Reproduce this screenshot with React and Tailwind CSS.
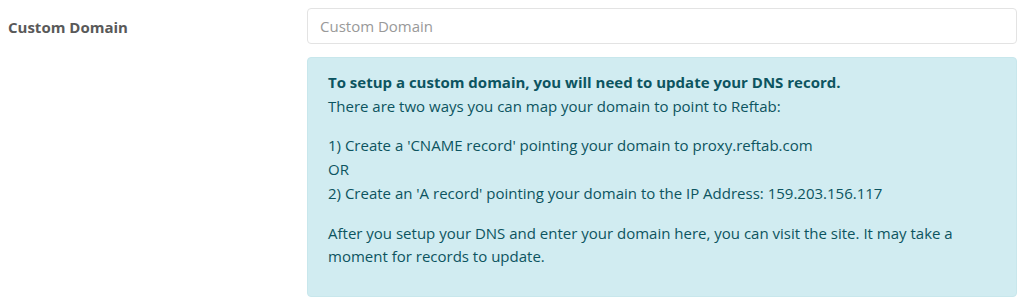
export default function App() {
  return (
    <div className="w-[1024px] h-[302px] bg-white flex" style={{ fontFamily: '"Open Sans", "Noto Sans", sans-serif' }}>
      <div className="w-[307px] shrink-0 pl-2 pt-[15px]">
        <div className="text-[15px] leading-6 font-bold text-[#595959]">Custom Domain</div>
      </div>
      <div className="w-[710px] shrink-0 pt-2 flex flex-col">
        <input
          type="text"
          placeholder="Custom Domain"
          className="h-[36px] w-full rounded border border-[#e3e3e3] px-3 text-[15px] text-[#555] placeholder:text-[#999999] outline-none"
          style={{ fontFamily: '"Open Sans", sans-serif' }}
        />
        <div className="mt-[13px] rounded border border-[#c8e7ec] bg-[#d1ecf1] px-5 pt-[13px] pb-[11px] text-[15px] leading-[23.7px] text-[#0c5460]">
          <p className="mb-4">
            <strong className="font-bold">To setup a custom domain, you will need to update your DNS record.</strong>
            <br />
            There are two ways you can map your domain to point to Reftab:
          </p>
          <p className="mb-4">
            1) Create a 'CNAME record' pointing your domain to proxy.reftab.com
            <br />
            OR
            <br />
            2) Create an 'A record' pointing your domain to the IP Address: 159.203.156.117
          </p>
          <p className="mb-4">
            After you setup your DNS and enter your domain here, you can visit the site. It may take a
            <br />
            moment for records to update.
          </p>
        </div>
      </div>
    </div>
  );
}
